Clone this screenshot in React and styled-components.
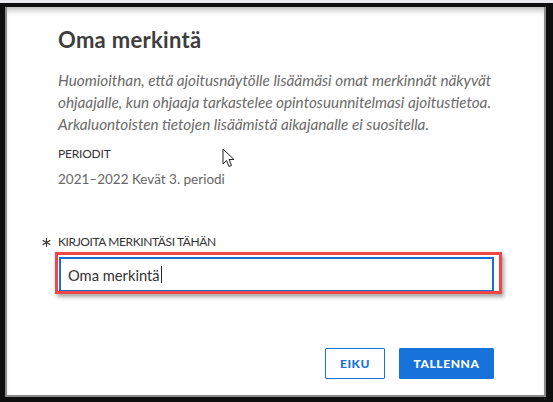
import React from "react";
import styled, { createGlobalStyle } from "styled-components";

const Global = createGlobalStyle`
  html, body { margin: 0; padding: 0; background: #e9e9ee; }
  body { font-family: "Lato", "Noto Sans", sans-serif; }
  * { box-sizing: border-box; }
`;

const Frame = styled.div`
  margin-top: 3px;
  width: 553px;
  height: 399px;
  border-style: solid;
  border-color: #0e0e0e;
  border-width: 4px 7px 5px 5px;
  display: flex;
`;

const Dialog = styled.div`
  position: relative;
  flex: 1;
  background: #fff;
  border-style: solid;
  border-color: #8a8a8a;
  border-width: 0 2px 2px 2px;
  box-shadow: inset 0 7px 6px -4px rgba(0, 0, 0, 0.28);
  padding: 20px 50px 0 51px;
  display: flex;
  flex-direction: column;
`;

const Title = styled.h2`
  margin: 0;
  font-family: "Lato", sans-serif;
  font-weight: 700;
  font-size: 22px;
  line-height: 26px;
  letter-spacing: 0.3px;
  color: #3d3d3d;
`;

const Notice = styled.p`
  margin: 16px 0 0;
  font-style: italic;
  font-size: 15.3px;
  line-height: 22px;
  color: #6a6a6a;
`;

const FieldLabel = styled.div`
  margin-top: ${(p) => p.$mt || 0}px;
  font-size: 12px;
  line-height: 18px;
  letter-spacing: ${(p) => (p.$tight ? -0.4 : -0.2)}px;
  color: #333;
  text-transform: uppercase;
  display: flex;
  align-items: center;
`;

const Value = styled.div`
  margin-top: 6px;
  font-size: 13.5px;
  line-height: 20px;
  color: #666;
`;

const Required = styled.svg`
  flex: none;
  margin-left: -16.5px;
  margin-right: 7.5px;
`;

const FieldWrap = styled.div`
  position: relative;
  margin-top: 6px;
  margin-left: 1px;
`;

const Input = styled.div`
  height: 35px;
  border: 2px solid #1a6ed0;
  padding: 0 7px;
  display: flex;
  align-items: center;
  font-size: 14.7px;
  color: #333;
`;

const Caret = styled.span`
  display: inline-block;
  width: 1px;
  height: 17px;
  background: #222;
  margin-left: 1px;
`;

const Highlight = styled.div`
  position: absolute;
  left: -4px;
  top: -5px;
  right: -8px;
  bottom: -2px;
  border: 3px solid #f24646;
  box-shadow: 2px 3px 4px rgba(0, 0, 0, 0.35);
  pointer-events: none;
`;

const Actions = styled.div`
  margin-top: auto;
  margin-bottom: 16px;
  display: flex;
  justify-content: flex-end;
  gap: 14px;
`;

const Button = styled.button`
  height: 31px;
  width: ${(p) => (p.$primary ? 95 : 60)}px;
  padding: 0;
  font-family: "Lato", sans-serif;
  font-weight: 900;
  font-size: 12px;
  letter-spacing: 0.6px;
  text-transform: uppercase;
  border: 1px solid #1773da;
  border-radius: 1px;
  background: ${(p) => (p.$primary ? "#1773da" : "#fff")};
  color: ${(p) => (p.$primary ? "#fff" : "#1773da")};
`;

const Pointer = styled.svg`
  position: absolute;
  left: 215px;
  top: 141px;
`;

export default function App() {
  return (
    <>
      <Global />
      <Frame>
        <Dialog>
          <Title>Oma merkintä</Title>
          <Notice>
            Huomioithan, että ajoitusnäytölle lisäämäsi omat merkinnät näkyvät
            <br />
            ohjaajalle, kun ohjaaja tarkastelee opintosuunnitelmasi ajoitustietoa.
            <br />
            Arkaluontoisten tietojen lisäämistä aikajanalle ei suositella.
          </Notice>
          <FieldLabel $mt={10}>Periodit</FieldLabel>
          <Value>2021–2022 Kevät 3. periodi</Value>
          <FieldLabel $mt={44} $tight>
            <Required width="9" height="9" viewBox="0 0 10 10">
              <g stroke="#333" strokeWidth="1.2" strokeLinecap="round">
                <line x1="5" y1="0.5" x2="5" y2="9.5" />
                <line x1="1.1" y1="2.75" x2="8.9" y2="7.25" />
                <line x1="1.1" y1="7.25" x2="8.9" y2="2.75" />
              </g>
            </Required>
            Kirjoita merkintäsi tähän
          </FieldLabel>
          <FieldWrap>
            <Input>
              Oma merkintä
              <Caret />
            </Input>
            <Highlight />
          </FieldWrap>
          <Actions>
            <Button>Eiku</Button>
            <Button $primary>Tallenna</Button>
          </Actions>
          <Pointer width="14" height="20" viewBox="0 0 14 20">
            <path
              d="M1 1 L1 16 L4.5 12.5 L7 18.5 L9.5 17.5 L7 11.5 L12 11.5 Z"
              fill="#fff"
              stroke="#222"
              strokeWidth="1"
              strokeLinejoin="round"
            />
          </Pointer>
        </Dialog>
      </Frame>
    </>
  );
}
